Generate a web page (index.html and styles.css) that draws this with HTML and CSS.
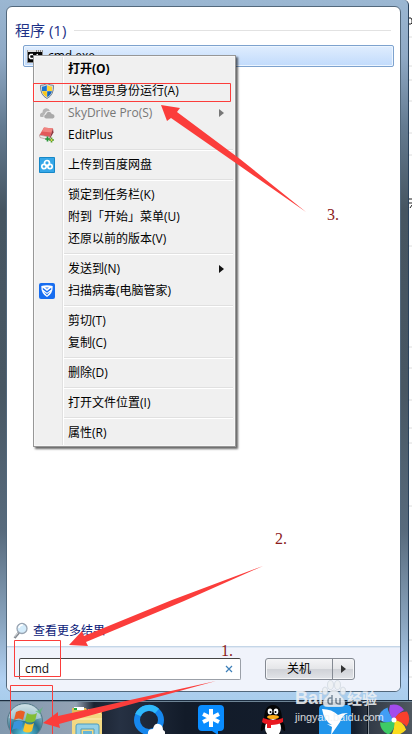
FILE: index.html
```html
<!DOCTYPE html>
<html lang="zh-CN">
<head>
<meta charset="utf-8">
<meta name="viewport" content="width=device-width, initial-scale=1">
<title>程序 (1)</title>
<link rel="stylesheet" href="styles.css">
</head>
<body>
<main class="desktop">
  <section class="start-menu">
    <div class="panel">
      <div class="results">
        <h1 class="group-title">程序 (1)</h1>
        <a class="result" href="#">
          <svg width="16" height="16" viewBox="0 0 16 16" aria-hidden="true">
            <path fill="#050505" stroke="#8c8c8c" d="M.5 2.500h15v12h-15z"/><path fill="#ddd" d="M1 2h14v2H1z"/><path stroke="#222" stroke-dasharray="1 1" d="M9 3h5"/>
            <path fill="none" stroke="#fff" stroke-width="1.500" d="M6 6.500H3.500L2.500 7.500v2l1 1H6M8 7v1M8 10v1M10 6l2 5"/>
          </svg>
          <span>cmd.exe</span>
        </a>
      </div>
      <a class="more" href="#">
        <svg width="16" height="18" viewBox="0 0 16 18" aria-hidden="true">
          <path d="M1.500 16 6 10.500" stroke="#858b92" stroke-width="2.500"/><path d="M1.500 15 5 11" stroke="#d5d9dd"/>
          <circle cx="9" cy="6.500" r="5" fill="#d4ecfb" stroke="#98a4b2" stroke-width="1.300"/><path d="M5.800 6q.8-3 4-3.200" stroke="#fff" stroke-width="1.500" fill="none"/>
        </svg>
        <span>查看更多结果</span>
      </a>
      <footer class="bar">
        <div class="search">
          <input type="text" value="cmd" aria-label="搜索程序和文件">
          <button class="clear" type="button" aria-label="清除"><svg width="8" height="8" viewBox="0 0 8 8"><path d="m1 1 6 6m0-6L1 7" stroke="#3d7fb8" stroke-width="1.200"/></svg></button>
        </div>
        <div class="power">
          <button class="shutdown" type="button">关机</button>
          <button class="options" type="button" aria-label="关机选项"><svg width="5" height="8" viewBox="0 0 5 8"><path d="M0 0v8l5-4z" fill="#333"/></svg></button>
        </div>
      </footer>
    </div>
  </section>

  <div class="menu" role="menu">
    <div class="menu-group">
      <button class="item default" role="menuitem"><span>打开(O)</span></button>
      <button class="item" role="menuitem">
        <svg class="icon" width="16" height="16" viewBox="0 0 16 16"><path d="M8 .5Q5 2.300 1.500 2.300 1 12 8 15.500 15 12 14.500 2.300 11 2.300 8 .5z" fill="#d7dce0" stroke="#76828c"/><path d="M7.800 2.200Q5.500 3.500 3 3.700V8h4.800z" fill="#1674d3"/><path d="M8.200 2.200Q10.500 3.500 13 3.700V8H8.200z" fill="#ffd42c"/><path d="M3.100 8.200h4.700V14Q4 12 3.100 8.200z" fill="#f9c716"/><path d="M12.900 8.200H8.200V14Q12 12 12.900 8.200z" fill="#1266bd"/></svg>
        <span>以管理员身份运行(A)</span></button>
      <button class="item" role="menuitem" disabled>
        <svg class="icon" width="16" height="16" viewBox="0 0 16 16"><path d="M1 11Q.5 8 3.500 7.500 3.500 3.500 7 3.200 10 3 11 6 6.500 5.500 6 9 4 10 4.500 12H2Q1.200 12 1 11z" fill="#b4b4b4"/><path d="M7 13.500q-2-.3-1.800-2.200Q5.500 9.700 7 9.500 7.500 6.500 10 6.700q2.200.2 2.800 2.300 2.700.2 2.700 2.500 0 1.700-1.700 2z" fill="#a9a9a9"/></svg>
        <span>SkyDrive Pro(S)</span><svg class="sub" width="5" height="8" viewBox="0 0 5 8"><path d="M0 0v8l5-4z" fill="#777"/></svg></button>
      <button class="item" role="menuitem">
        <svg class="icon" width="16" height="16" viewBox="0 0 16 16"><path d="M5 .5 14 1.500 11 10 .5 8z" fill="#e2595a"/><path d="M5 .5 14 1.500 12.500 5.500 3 4.500z" fill="#f08480"/><path d="m.5 8 10.500 2-.8 2.800L1 10.500z" fill="#eee" stroke="#a98080" stroke-width=".6"/><path d="M14 1.500 11 10l-.5 2.500 4-7z" fill="#8c343c"/><path d="M8.500 9.500v5m-2.300-2.500h4.600" stroke="#25963a" stroke-width="1.700"/><path d="M12.500 10.500v5M10 13h5" stroke="#56a32b" stroke-width="1.700"/><path d="M12.500 12v2" stroke="#e7c940"/></svg>
        <span>EditPlus</span></button>
    </div>
    <div class="menu-group">
      <button class="item" role="menuitem">
        <svg class="icon" width="16" height="16" viewBox="0 0 16 16"><path fill="#35a7e8" stroke="#1687c7" d="M.5.5h15v15H.5z"/><g fill="none" stroke="#fff" stroke-width="1.700"><circle cx="8" cy="6" r="2.500"/><circle cx="5" cy="9.500" r="2.200"/><circle cx="11" cy="9.500" r="2.200"/></g></svg>
        <span>上传到百度网盘</span></button>
    </div>
    <div class="menu-group">
      <button class="item" role="menuitem"><span>锁定到任务栏(K)</span></button>
      <button class="item" role="menuitem"><span>附到「开始」菜单(U)</span></button>
      <button class="item" role="menuitem"><span>还原以前的版本(V)</span></button>
    </div>
    <div class="menu-group">
      <button class="item" role="menuitem"><span>发送到(N)</span><svg class="sub" width="5" height="8" viewBox="0 0 5 8"><path d="M0 0v8l5-4z" fill="#111"/></svg></button>
      <button class="item" role="menuitem">
        <svg class="icon" width="16" height="16" viewBox="0 0 16 16"><rect width="16" height="16" rx="2" fill="#176df0"/><path d="M2.300 3Q8 1.500 13.700 3 14 10.500 8 14 2 10.500 2.300 3z" fill="#fff"/><path d="M3.800 4.800 8 8l4.200-3.200v1.700L8 9.700 3.800 6.500zM4.500 8.500 8 11l3.500-2.500L8 12.500z" fill="#176df0"/><path d="m6 4.500 2 1.300 2-1.300z" fill="#176df0"/></svg>
        <span>扫描病毒(电脑管家)</span></button>
    </div>
    <div class="menu-group">
      <button class="item" role="menuitem"><span>剪切(T)</span></button>
      <button class="item" role="menuitem"><span>复制(C)</span></button>
    </div>
    <div class="menu-group"><button class="item" role="menuitem"><span>删除(D)</span></button></div>
    <div class="menu-group"><button class="item" role="menuitem"><span>打开文件位置(I)</span></button></div>
    <div class="menu-group"><button class="item" role="menuitem"><span>属性(R)</span></button></div>
  </div>

  <nav class="taskbar" aria-label="任务栏">
    <button class="task start" aria-label="开始">
      <svg width="38" height="34" viewBox="0 0 38 34"><defs><radialGradient id="orb" cx=".5" cy=".9" r=".85"><stop offset="0" stop-color="#62d5ef"/><stop offset=".5" stop-color="#27728d"/><stop offset="1" stop-color="#b8ced8"/></radialGradient></defs>
      <circle cx="19" cy="20" r="17.500" fill="url(#orb)" stroke="#547989"/><path d="M3 17Q5 4 19 3.500 32 4 35 17 19 23 3 17z" fill="#d9ebef" opacity=".55"/>
      <path d="M10 11q5-3 9 0l-2 8q-4-3-9 0z" fill="#e85d25"/><path d="M21 12q5 3 10 0l-2 8q-5 3-10 0z" fill="#83bd35"/><path d="M8 21q5-3 9 0l-2 8q-5-3-9 0z" fill="#3a94db"/><path d="M19 22q5 3 9 0l-2 8q-4 3-9 0z" fill="#fbc52d"/><path d="M29 10q4 0 8-4l-3 7z" fill="#58bf70" opacity=".7"/></svg>
    </button>
    <button class="task" aria-label="资源管理器">
      <svg width="32" height="34" viewBox="0 0 32 34"><path d="M1 7h14l2 4h14v23H1z" fill="#e2bd59"/><path d="M3 6h10v3H3z" fill="#fff"/><path d="M3 7h3v2H3z" fill="#20a936"/><path d="M17 8h13v6H17z" fill="#f7e7a1"/><path d="M1 13h30v21H1z" fill="#f3d983"/><path d="M1 18h30" stroke="#fff0b8"/><path d="M5 34V25q0-2 2-2h19q2 0 2 2v9h-5v-6H10v6z" fill="#93d0e7" stroke="#4d9bbd"/><path d="M12 34v-4h9v4" fill="#64b4d6"/></svg>
    </button>
    <button class="task" aria-label="QQ浏览器">
      <svg width="32" height="34" viewBox="0 0 32 34"><circle cx="16" cy="19" r="12" fill="none" stroke="#1687ed" stroke-width="6"/><path d="M5 14A12 12 0 0 1 24 10" fill="none" stroke="#30bafa" stroke-width="6"/><path d="M15 34q-1-6 5-6 1-6 6-5 4 1 4 6 3 1 2 5z" fill="#fff"/></svg>
    </button>
    <button class="task" aria-label="星号应用">
      <svg width="28" height="34" viewBox="0 0 28 34"><path d="M5 4h18q4 0 4 4v18q0 4-4 4h-2v4l-6-4H5q-4 0-4-4V8q0-4 4-4z" fill="#098cff"/><path d="M14 8v18M6 13l16 8M22 13 6 21" stroke="#fff" stroke-width="4"/></svg>
    </button>
    <button class="task" aria-label="QQ">
      <svg width="28" height="34" viewBox="0 0 28 34"><path d="M5 19Q5 4 14 4t9 15q4 6 3 11-2 0-4-4l-1 8H7l-1-8q-2 4-4 4-1-5 3-11z" fill="#050505"/><ellipse cx="14" cy="27" rx="8" ry="9" fill="#fff"/><path d="M4 17q10 4 20 0v4q-5 3-12 3v3H8v-4q-3 0-5-2z" fill="#e91820"/><ellipse cx="11" cy="10.500" rx="2.300" ry="3" fill="#fff"/><ellipse cx="17" cy="10.500" rx="2.300" ry="3" fill="#fff"/><circle cx="11.500" cy="11" r="1" /><circle cx="16.500" cy="11" r="1"/><ellipse cx="14" cy="16" rx="6" ry="2" fill="#ffac16"/></svg>
    </button>
    <button class="task" aria-label="迅雷">
      <svg width="32" height="34" viewBox="0 0 32 34"><path d="M4 4h24q4 0 4 4v26H0V8q0-4 4-4z" fill="#2195eb"/><path d="M3 8q10 0 16 6 4-2 9-2-5 3-7 9l-9 13 1-8-5-3 5 1Q5 20 3 8z" fill="#fff"/></svg>
    </button>
    <button class="task wheel" aria-label="浏览器">
      <svg width="32" height="34" viewBox="-16 -19 32 34"><path d="M0 0Q-7-6-4-15 5-17 10-10 5-8 0 0z" fill="#a34cec"/><path transform="rotate(72)" d="M0 0Q-7-6-4-15 5-17 10-10 5-8 0 0z" fill="#f9402c"/><path transform="rotate(144)" d="M0 0Q-7-6-4-15 5-17 10-10 5-8 0 0z" fill="#fbdb1d"/><path transform="rotate(216)" d="M0 0Q-7-6-4-15 5-17 10-10 5-8 0 0z" fill="#3ecb65"/><path transform="rotate(288)" d="M0 0Q-7-6-4-15 5-17 10-10 5-8 0 0z" fill="#429ef5"/><circle r="2.500" fill="#fff"/></svg>
    </button>
  </nav>

  <div class="watermark">
    <div class="brand"><span>Bai</span><svg width="24" height="27" viewBox="0 0 24 27"><g fill="#eef1f4" stroke="#b9c4cf" stroke-width=".5"><ellipse cx="3" cy="11" rx="2.700" ry="4"/><ellipse cx="8.500" cy="5" rx="3" ry="4.500"/><ellipse cx="15.500" cy="5" rx="3" ry="4.500"/><ellipse cx="21" cy="11" rx="2.700" ry="4"/><path d="M12 10q4 0 6 5 5 4 5 8 0 4-5 4H6q-5 0-5-4 0-4 5-8 2-5 6-5z"/></g><path d="M10 15v9H8q-2 0-2-3t2-3h2m4 0v4q0 2 4 2v-6" fill="none" stroke="#758492" stroke-width="1.500"/></svg><span class="cn">经验</span></div>
    <div class="site">jingyan.baidu.com</div>
  </div>

  <svg class="edge" width="3" height="700" viewBox="0 0 3 700" aria-hidden="true"><path d="M0 37h3M0 66h3M0 80h3M0 101h3M0 133h3M0 155h3M0 246h3M0 347h3M0 368h3M0 400h3M0 428h3M0 443h3M0 506h3M0 640h3M0 661h3M0 677h3" stroke="#dedede"/><path d="M0 18h2l1 2v3l-1 1H0M0 199h3M0 203h3M1 208l2-3" stroke="#222" fill="none"/></svg>

  <svg class="marks" width="412" height="734" viewBox="0 0 412 734" aria-hidden="true">
    <g fill="none" stroke="#fb3d3b"><path d="M33.500 83.500h197v18h-197zM14.500 640.500h46v36h-46zM10.500 685.500h42v56h-42z"/></g>
    <g fill="#fb3d3b"><path d="M161 105 180 108 177 112 240 159 306 212 240 166 171 118 167 121z"/><path d="M69 645 82 631 84 636 172 600 263 566 184 601 86 642 88 646z"/><path d="M43 723 58 712 58 716 216 681 59 724 60 728z"/></g>
  </svg>
  <span class="step one">1.</span><span class="step two">2.</span><span class="step three">3.</span>
</main>
</body>
</html>
```
FILE: styles.css
```css
* { box-sizing: border-box; }
body {
  margin: 0;
  font: 12px/22px "Open Sans", "Noto Sans CJK SC", sans-serif;
  color: #000;
}
button { margin: 0; padding: 0; border: 0; background: none; font: inherit; color: inherit; }
a { color: inherit; text-decoration: none; }
svg { display: block; flex: none; }

.desktop {
  position: relative;
  display: flex;
  flex-direction: column;
  min-height: 100vh;
  overflow: hidden;
  background: #fff;
}
.start-menu {
  flex: 1;
  display: flex;
  margin-right: 3px;
  padding: 6px 7px 8px 6px;
  border-right: 1px solid #29415b;
  border-radius: 0 5px 0 0;
  background: linear-gradient(#9bb7d2, #8fa9c5 8%, #647b91 18%, #465561 30%, #485763 56%, #586b7d 76%, #8aa5bf 89%, #b1d0f1 97%, #a9cdec);
}
.panel {
  flex: 1;
  display: flex;
  flex-direction: column;
  border: 1px solid #52687c;
  border-radius: 6px;
  background: #fff;
  overflow: hidden;
}
.results { flex: 1; padding: 12px 6px 12px 7px; }
.group-title {
  display: flex;
  align-items: center;
  gap: 8px;
  margin: 0 3px 4px 1px;
  font-size: 15px;
  font-weight: 400;
  color: #1e3287;
}
.group-title::after { content: ""; flex: 1; height: 1px; background: #e2e2e2; }
.result {
  display: flex;
  align-items: center;
  gap: 5px;
  height: 22px;
  margin-left: 9px;
  padding-left: 3px;
  border: 1px solid #7da2ce;
  border-radius: 2px;
  background: linear-gradient(#dfedfe, #c1dbfc);
  box-shadow: inset 0 0 0 1px #ecf5ff;
}
.more { display: flex; align-items: center; gap: 4px; padding: 0 6px 4px; color: #0b2078; }
.bar {
  display: flex;
  align-items: flex-start;
  gap: 24px;
  height: 45px;
  padding: 11px 45px 0 12px;
  border-top: 1px solid #c5d6e8;
  background: #f0f3fb;
  box-shadow: inset 0 1px #dfe8f3;
}
.search {
  flex: 1;
  display: flex;
  align-items: center;
  height: 22px;
  padding: 0 7px 0 5px;
  border: 1px solid #9ba0a8;
  border-top-color: #444;
  border-left-color: #555;
  border-radius: 2px;
  background: #fff;
}
.search input { flex: 1; min-width: 0; padding: 0; border: 0; outline: 0; background: none; font: inherit; color: #111; }
.power {
  display: flex;
  width: 90px;
  height: 22px;
  border: 1px solid #858a93;
  border-radius: 3px;
  background: linear-gradient(#f4f4f6, #e5e6e9 48%, #d0d2d7 52%, #e2e4e8);
  box-shadow: inset 0 0 0 1px #f4f5f7;
}
.shutdown { flex: 1; line-height: 20px; }
.options { display: grid; place-items: center; width: 22px; border-left: 1px solid #858a93; }

.menu {
  position: absolute;
  top: 55px;
  left: 33px;
  width: 203px;
  padding: 2px;
  border: 1px solid #979797;
  background: linear-gradient(90deg, #f0f0f0 28px, #e1e1e1 28px, #e1e1e1 29px, #fff 29px, #fff 30px, #f0f0f0 30px);
  box-shadow: inset 0 0 0 1px #f7f7f7, 2px 2px 2px rgba(0, 0, 0, .6);
}
.menu-group + .menu-group { padding-top: 8px; background: linear-gradient(#e0e0e0, #e0e0e0) 28px 3px / 169px 1px no-repeat, linear-gradient(#fff, #fff) 28px 4px / 169px 1px no-repeat; }
.item {
  display: grid;
  grid-template-columns: 29px 1fr 9px;
  align-items: center;
  width: 100%;
  height: 22px;
  padding: 0 5px 0 3px;
  text-align: left;
  white-space: nowrap;
}
.item span { grid-column: 2; }
.item .icon { grid-column: 1; }
.item:disabled { color: #777; }
.default { font-weight: 700; }

.taskbar {
  display: flex;
  height: 34px;
  border-top: 1px solid #1c2d40;
  box-shadow: inset 0 1px #6e8495;
  background: linear-gradient(90deg, #8198ae 0, #93a2b4 76px, #1a2230 94px, #263143 120px, #121b29 45%, #141e2d 86%, #333c48 90%, #505860);
}
.task { display: flex; justify-content: center; flex: none; width: 62px; height: 33px; overflow: hidden; }
.start { width: 56px; padding-right: 6px; }
.wheel { width: 46px; margin-left: 2px; padding-right: 0; border-left: 1px solid #8b939b; box-shadow: -1px 0 #07111d; }
.wheel svg { margin-left: 4px; }

.watermark { position: absolute; left: 295px; bottom: 10px; color: #eef1f4; opacity: .88; white-space: nowrap; }
.brand { display: flex; align-items: flex-end; gap: 1px; padding-bottom: 3px; font: 700 18px/18px "Liberation Sans", sans-serif; }
.brand svg { margin-left: -2px; }
.brand .cn { font: 700 15px/18px "Noto Sans CJK SC", sans-serif; }
.site { font: 11px/14px "Liberation Sans", sans-serif; }
.edge { position: absolute; top: 0; right: 0; }
.marks { position: absolute; top: 0; left: 0; pointer-events: none; }
.step { position: absolute; font: 16px/16px "Liberation Serif", serif; color: #8c1b1b; }
.one { left: 221px; top: 643px; }
.two { left: 275px; top: 531px; }
.three { left: 327px; top: 207px; }
```
